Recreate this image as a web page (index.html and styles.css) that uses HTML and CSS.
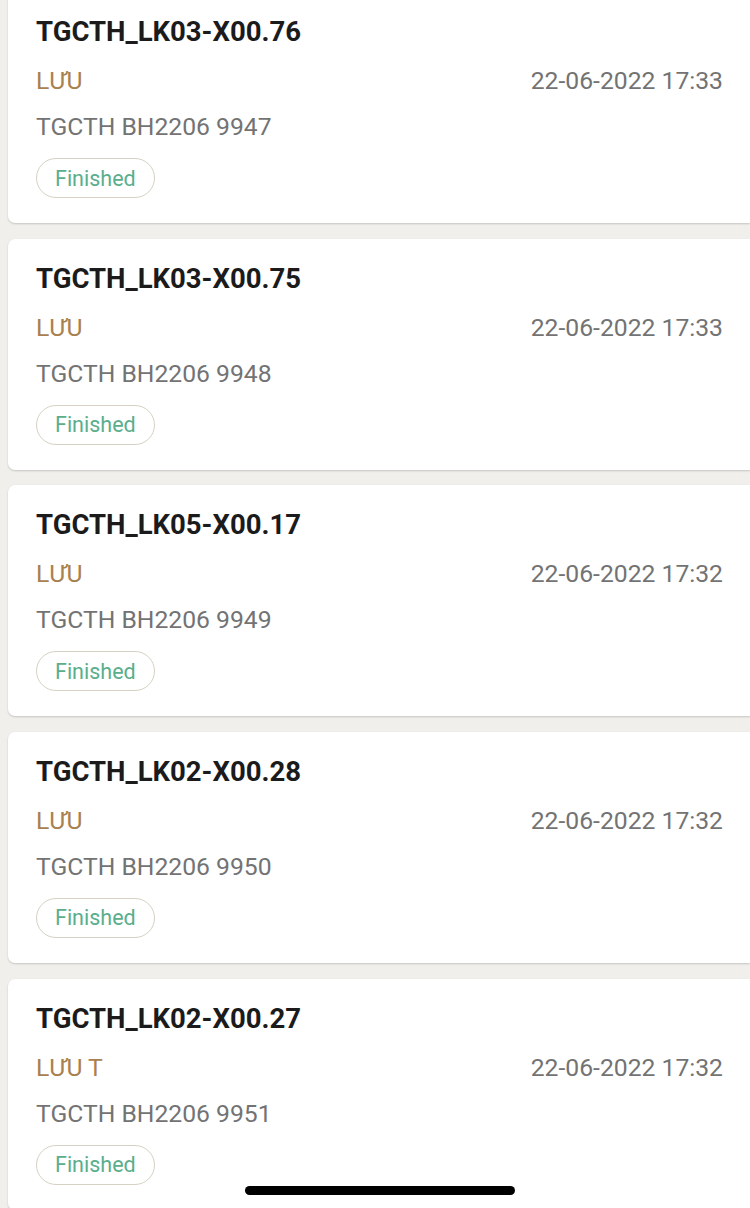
FILE: index.html
```html
<!DOCTYPE html>
<html>

<head>
  <title>Orders</title>
  <meta charset="utf-8" />
  <meta name="viewport" content="width=device-width, initial-scale=1.0" />
  <link rel="stylesheet" href="styles.css">
</head>

<body>
  <div class="list">
    <div class="card">
      <div class="title">TGCTH_LK03-X00.76</div>
      <div class="row"><span class="name">LƯU</span><span class="date">22-06-2022 17:33</span></div>
      <div class="code">TGCTH BH2206 9947</div>
      <span class="badge">Finished</span>
    </div>
    <div class="card">
      <div class="title">TGCTH_LK03-X00.75</div>
      <div class="row"><span class="name">LƯU</span><span class="date">22-06-2022 17:33</span></div>
      <div class="code">TGCTH BH2206 9948</div>
      <span class="badge">Finished</span>
    </div>
    <div class="card">
      <div class="title">TGCTH_LK05-X00.17</div>
      <div class="row"><span class="name">LƯU</span><span class="date">22-06-2022 17:32</span></div>
      <div class="code">TGCTH BH2206 9949</div>
      <span class="badge">Finished</span>
    </div>
    <div class="card">
      <div class="title">TGCTH_LK02-X00.28</div>
      <div class="row"><span class="name">LƯU</span><span class="date">22-06-2022 17:32</span></div>
      <div class="code">TGCTH BH2206 9950</div>
      <span class="badge">Finished</span>
    </div>
    <div class="card">
      <div class="title">TGCTH_LK02-X00.27</div>
      <div class="row"><span class="name">LƯU T</span><span class="date">22-06-2022 17:32</span></div>
      <div class="code">TGCTH BH2206 9951</div>
      <span class="badge">Finished</span>
    </div>
  </div>
  <div class="home-bar"></div>
</body>

</html>
```

FILE: styles.css
```css
html,
body {
  height: 100%;
}
body {
  margin: 0;
  padding: 0;
  background: #f0efeb;
  font-family: 'Roboto', 'Liberation Sans', sans-serif;
  overflow: hidden;
  position: relative;
}
.list {
  display: flex;
  flex-direction: column;
  gap: 15.67px;
  margin-top: -8px;
  padding-left: 8px;
}
.card {
  background: #fff;
  border-radius: 7px 0 0 7px;
  box-shadow: 0 1px 2px rgba(0, 0, 0, 0.18);
  height: 231px;
  box-sizing: border-box;
  padding: 24px 27px 25px 28px;
  display: flex;
  flex-direction: column;
  align-items: flex-start;
}
.title {
  font-size: 27.5px;
  line-height: 32px;
  font-weight: bold;
  color: #1b1b1b;
}
.row {
  align-self: stretch;
  display: flex;
  justify-content: space-between;
  margin-top: 18px;
  font-size: 24.7px;
  line-height: 30px;
}
.name {
  color: #a8814e;
}
.date {
  color: #737373;
}
.code {
  margin-top: 16px;
  font-size: 24.7px;
  line-height: 30px;
  color: #737373;
}
.badge {
  margin-top: 16px;
  height: 40px;
  box-sizing: border-box;
  padding: 0 18px;
  border: 1.5px solid #d6d1c4;
  border-radius: 20px;
  display: flex;
  align-items: center;
  font-size: 21.5px;
  color: #5aae8c;
}
.home-bar {
  position: absolute;
  left: 245px;
  top: 1186px;
  width: 270px;
  height: 9px;
  border-radius: 5px;
  background: #000;
}
```
